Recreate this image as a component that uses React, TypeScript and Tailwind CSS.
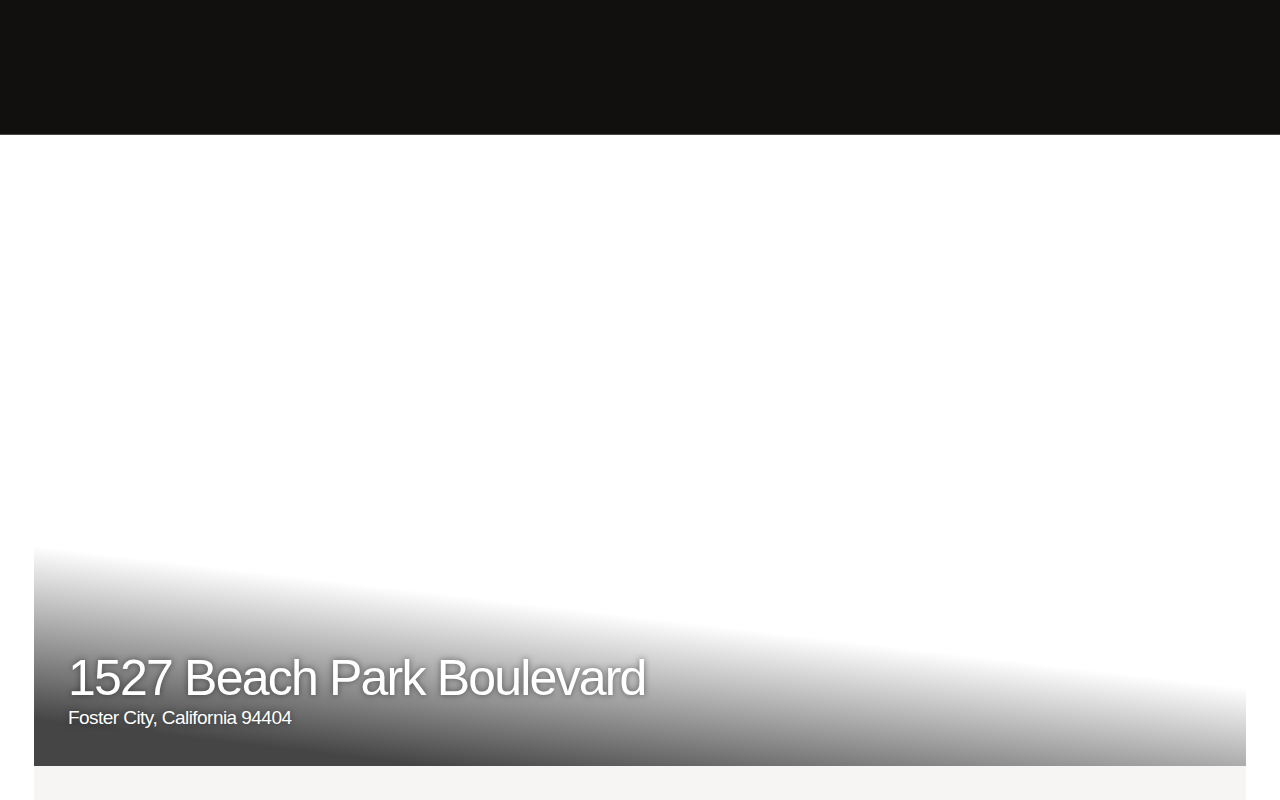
export default function App() {
  return (
    <div className="min-h-screen bg-white font-['Liberation_Sans',Arial,sans-serif]">
      <header className="h-[135px] border-b border-[#4a4a4a] bg-[#11100e]"></header>

      <main className="px-[34px]">
        {/* hero, photo not loaded so it shows white */}
        <section className="relative flex h-[631px] flex-col justify-end bg-white">
          <div className="absolute inset-0 bg-[linear-gradient(186.7deg,rgba(0,0,0,0)_71.5%,rgba(0,0,0,0.73)_94%)]"></div>
          <div className="relative px-[34px] pb-[37px] text-white [text-shadow:0_0_6px_rgba(0,0,0,0.5)]">
            <h1 className="text-[50px] leading-[50px] tracking-[-1.8px]">
              1527 Beach Park Boulevard
            </h1>
            <p className="mt-[4px] text-[19px] leading-[22px] tracking-[-0.55px]">
              Foster City, California 94404
            </p>
          </div>
        </section>

        <section className="h-[300px] bg-[#f6f5f3]"></section>
      </main>
    </div>
  );
}
